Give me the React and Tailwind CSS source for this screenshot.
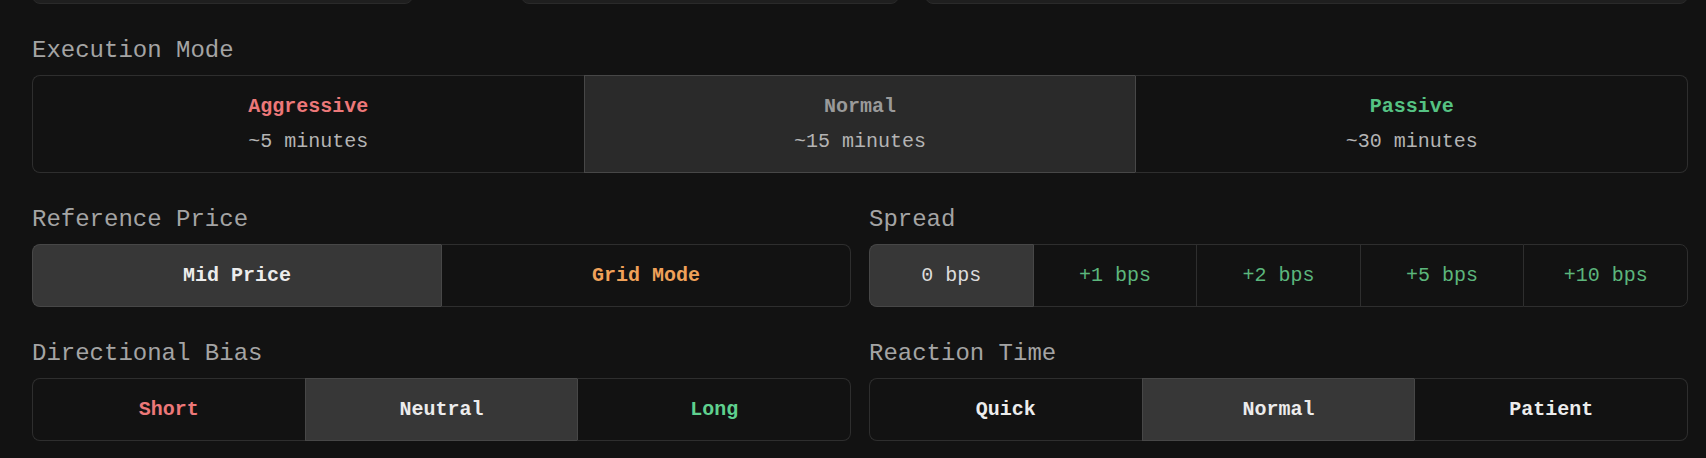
const mono = { fontFamily: '"Liberation Mono", "DejaVu Sans Mono", monospace' }

const executionModes = [
  { name: 'Aggressive', time: '~5 minutes', color: 'text-[#ec7879]' },
  { name: 'Normal', time: '~15 minutes', color: 'text-[#9a9a9a]' },
  { name: 'Passive', time: '~30 minutes', color: 'text-[#55c283]' },
]

const referencePrices = [
  { name: 'Mid Price', color: 'text-[#ececec]', bold: true },
  { name: 'Grid Mode', color: 'text-[#f0a159]', bold: true },
]

const spreads = [
  { name: '0 bps', color: 'text-[#dcdcdc]' },
  { name: '+1 bps', color: 'text-[#5cb67c]' },
  { name: '+2 bps', color: 'text-[#5cb67c]' },
  { name: '+5 bps', color: 'text-[#5cb67c]' },
  { name: '+10 bps', color: 'text-[#5cb67c]' },
]

const biases = [
  { name: 'Short', color: 'text-[#ec7879]', bold: true },
  { name: 'Neutral', color: 'text-[#ececec]', bold: true },
  { name: 'Long', color: 'text-[#5fd08e]', bold: true },
]

const reactions = [
  { name: 'Quick', color: 'text-[#ececec]', bold: true },
  { name: 'Normal', color: 'text-[#ececec]', bold: true },
  { name: 'Patient', color: 'text-[#ececec]', bold: true },
]

// one cell of a segmented control; borders are drawn per cell so the
// selected one can carry a lighter outline over the shared edge
const cellBorder = (index, count, selected, selectedBg) => {
  const isSel = index === selected
  const afterSel = index === selected + 1
  const last = index === count - 1
  return [
    'flex-1 basis-0 border-y border-l',
    last ? 'border-r' : '',
    index === 0 ? 'rounded-l-lg' : '',
    last ? 'rounded-r-lg' : '',
    isSel ? `border-[#474747] ${selectedBg}` : 'border-[#2e2e2e] bg-[#121212]',
    afterSel && !isSel ? 'border-l-[#474747]' : '',
    isSel && last ? 'border-r-[#474747]' : '',
  ].join(' ')
}

const Label = ({ children }) => (
  <div className="text-[24px] leading-8 text-[#a4a4a4] mb-2">{children}</div>
)

const Segmented = ({ items, selected }) => (
  <div className="flex">
    {items.map((item, i) => (
      <div
        key={item.name}
        className={`${cellBorder(i, items.length, selected, 'bg-[#373737]')} h-[63px] flex items-center justify-center`}
      >
        <span className={`text-[20px] leading-7 ${item.bold ? 'font-bold' : ''} ${item.color}`}>
          {item.name}
        </span>
      </div>
    ))}
  </div>
)

export default function App() {
  return (
    <div className="min-h-screen bg-[#121212] pl-8 pr-[18px]" style={mono}>
      {/* bottoms of the cards above, cut off by the viewport */}
      <div className="h-1 overflow-hidden flex items-end">
        <div className="w-[381px] h-10 shrink-0 rounded-lg border border-[#2a2a2a] bg-[#1f1f1f]" />
        <div className="ml-[108px] w-[378px] h-10 shrink-0 rounded-lg border border-[#2a2a2a] bg-[#1f1f1f]" />
        <div className="ml-[26px] flex-1 h-10 rounded-lg border border-[#2a2a2a] bg-[#1f1f1f]" />
      </div>

      {/* Execution Mode */}
      <div className="mt-[31px]">
        <Label>Execution Mode</Label>
        <div className="flex">
          {executionModes.map((mode, i) => (
            <div
              key={mode.name}
              className={`${cellBorder(i, executionModes.length, 1, 'bg-[#2a2a2a]')} h-[98px] flex flex-col items-center pt-[17px] gap-[7px]`}
            >
              <span className={`text-[20px] leading-7 font-bold ${mode.color}`}>{mode.name}</span>
              <span className="text-[20px] leading-7 text-[#b4b4b4]">{mode.time}</span>
            </div>
          ))}
        </div>
      </div>

      <div className="grid grid-cols-2 gap-x-[18px]">
        <div className="mt-[31px]">
          <Label>Reference Price</Label>
          <Segmented items={referencePrices} selected={0} />
        </div>
        <div className="mt-[31px]">
          <Label>Spread</Label>
          <Segmented items={spreads} selected={0} />
        </div>
        <div className="mt-[31px]">
          <Label>Directional Bias</Label>
          <Segmented items={biases} selected={1} />
        </div>
        <div className="mt-[31px]">
          <Label>Reaction Time</Label>
          <Segmented items={reactions} selected={1} />
        </div>
      </div>
    </div>
  )
}
